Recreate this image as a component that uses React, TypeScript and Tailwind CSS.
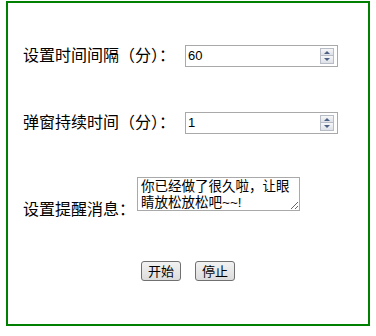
import React from "react";

const cjk = { fontFamily: '"Liberation Sans", "Noto Sans CJK SC", sans-serif' };

function Spinner() {
  return (
    <div className="absolute right-[3px] top-[2px] flex h-[16px] w-[14px] flex-col">
      <div className="flex h-[8px] items-center justify-center border border-[#b8bcc4] bg-gradient-to-b from-[#f6f7f9] to-[#dde1e7]">
        <svg width="6" height="3" viewBox="0 0 6 3">
          <path d="M0 3 L3 0 L6 3 Z" fill="#4d6185" />
        </svg>
      </div>
      <div className="flex h-[8px] items-center justify-center border border-t-0 border-[#b8bcc4] bg-gradient-to-b from-[#f6f7f9] to-[#dde1e7]">
        <svg width="6" height="3" viewBox="0 0 6 3">
          <path d="M0 0 L6 0 L3 3 Z" fill="#4d6185" />
        </svg>
      </div>
    </div>
  );
}

function NumberField({ value }: { value: string }) {
  return (
    <div className="relative h-[22px] w-[153px] border border-[#a9a9a9] bg-white">
      <span
        className="absolute left-[2px] top-[3px] text-[13px] leading-[14px] text-black"
        style={{ fontFamily: '"Liberation Sans", Arial, sans-serif' }}
      >
        {value}
      </span>
      <Spinner />
    </div>
  );
}

function Btn({ children }: { children: React.ReactNode }) {
  return (
    <button
      className="flex h-[20px] w-[40px] items-center justify-center rounded-[3px] border border-[#707070] bg-gradient-to-b from-[#f2f2f2] to-[#dcdcdc] text-[13px] leading-none text-black"
      style={cjk}
    >
      {children}
    </button>
  );
}

export default function App() {
  return (
    <div className="h-[336px] w-[376px] bg-white pt-[1px]" style={cjk}>
      <div className="ml-[6px] h-[325px] w-[364px] border-2 border-[#008000]">
        <div className="mt-[42px] flex items-center pl-[15px]">
          <span className="w-[162px] text-[16px] leading-none text-black">设置时间间隔（分）：</span>
          <NumberField value="60" />
        </div>
        <div className="mt-[45px] flex items-center pl-[15px]">
          <span className="w-[162px] text-[16px] leading-none text-black">弹窗持续时间（分）：</span>
          <NumberField value="1" />
        </div>
        <div className="mt-[43px] flex items-start pl-[15px]">
          <span className="mt-[25px] w-[114px] text-[16px] leading-none text-black">设置提醒消息：</span>
          <textarea
            readOnly
            defaultValue="你已经做了很久啦，让眼睛放松放松吧~~!"
            className="h-[34px] w-[163px] resize border border-[#a9a9a9] px-[3px] pt-[1px] text-[13.5px] leading-[16px] text-black outline-none"
            style={cjk}
          />
        </div>
        <div className="mt-[43px] flex justify-center gap-[14px]">
          <Btn>开始</Btn>
          <Btn>停止</Btn>
        </div>
      </div>
    </div>
  );
}
